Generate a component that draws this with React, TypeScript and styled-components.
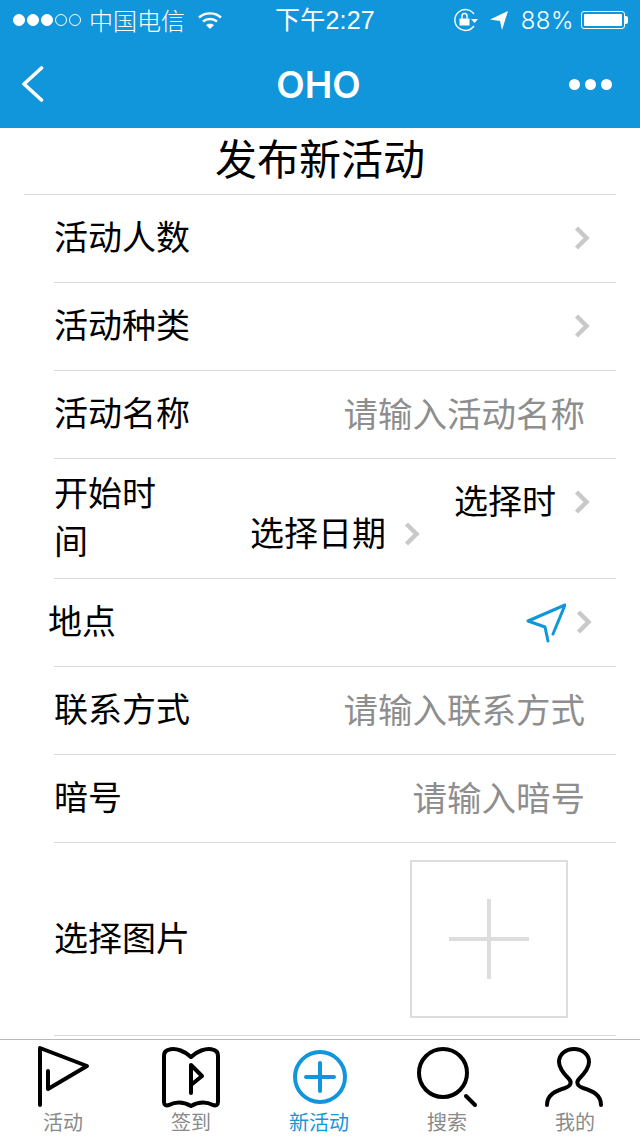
import React, { FunctionComponent } from 'react';
import styled, { createGlobalStyle } from 'styled-components';

const BLUE = '#1296db';
const CJK = `"Noto Sans CJK SC", "Noto Sans", sans-serif`;

const GlobalStyle = createGlobalStyle`
  html, body { margin: 0; padding: 0; background: #fff; }
  * { box-sizing: border-box; }
`;

const Page = styled.div`
  width: 640px;
  height: 1136px;
  display: flex;
  flex-direction: column;
  overflow: hidden;
  background: #fff;
  font-family: ${CJK};
  color: #000;
`;

const Header = styled.header`
  height: 128px;
  flex: none;
  background: ${BLUE};
  color: #fff;
  display: flex;
  flex-direction: column;
`;

const StatusBar = styled.div`
  height: 40px;
  padding: 0 13px;
  display: flex;
  align-items: center;
  justify-content: space-between;
  position: relative;
  font-size: 24px;
`;

const StatusGroup = styled.div`
  display: flex;
  align-items: center;
`;

const Dot = styled.span<{ $off?: boolean }>`
  width: 12px;
  height: 12px;
  margin-right: 2px;
  border-radius: 50%;
  background: ${(p) => (p.$off ? 'transparent' : '#fff')};
  border: 1px solid #fff;
`;

const Carrier = styled.span`
  margin: 0 12px 0 6px;
  font-size: 24px;
  line-height: 40px;
  font-weight: 300;
`;

const Clock = styled.span`
  position: absolute;
  left: 275px;
  top: 0;
  line-height: 40px;
  font-size: 25px;
  letter-spacing: 0.2px;
  font-family: "Liberation Sans", ${CJK};
`;

const Percent = styled.span`
  margin: 0 7px 0 12px;
  font-family: Inter, "Liberation Sans", sans-serif;
  font-size: 24px;
  font-weight: 300;
  letter-spacing: 0.5px;
`;

const Battery = styled.span`
  width: 44px;
  height: 18px;
  padding: 2px;
  border: 1px solid #fff;
  border-radius: 3px;
  display: flex;
  margin-right: 2px;
  position: relative;
  &::before {
    content: '';
    width: 38px;
    background: #fff;
    border-radius: 1px;
  }
  &::after {
    content: '';
    position: absolute;
    right: -4px;
    top: 4px;
    width: 3px;
    height: 8px;
    background: #fff;
    border-radius: 0 2px 2px 0;
  }
`;

const NavBar = styled.div`
  height: 88px;
  padding: 0 22px;
  display: flex;
  align-items: center;
  justify-content: space-between;
`;

const NavTitle = styled.div`
  font-family: Inter, "Liberation Sans", sans-serif;
  font-size: 37px;
  font-weight: 600;
  margin-left: 24px;
`;

const NavDots = styled.div`
  display: flex;
  gap: 5px;
  margin-right: 6px;
`;

const NavDot = styled.span`
  width: 11px;
  height: 11px;
  border-radius: 50%;
  background: #fff;
`;

const Main = styled.main`
  flex: 1;
  min-height: 0;
  padding: 0 24px;
`;

const Title = styled.h1`
  margin: 0;
  height: 67px;
  border-bottom: 1px solid #d9d9d9;
  font-size: 42px;
  font-weight: 400;
  line-height: 58px;
  text-align: center;
`;

const Row = styled.div<{ $height?: number }>`
  height: ${(p) => p.$height ?? 88}px;
  margin-left: 30px;
  padding-right: 26px;
  border-bottom: 1px solid #d9d9d9;
  display: flex;
  align-items: center;
  justify-content: space-between;
  font-size: 34px;
`;

const Label = styled.span`
  flex: none;
  padding-bottom: 6px;
`;

const NarrowLabel = styled(Label)`
  width: 110px;
  line-height: 48px;
`;

const LocationLabel = styled(Label)`
  margin-left: -6px;
`;

const TextField = styled.input`
  flex: 1;
  min-width: 0;
  margin-right: 5px;
  padding: 0 0 6px;
  border: 0;
  outline: 0;
  background: transparent;
  text-align: right;
  font: inherit;
  font-size: 34.5px;
  &::placeholder { color: #8e8e8e; opacity: 1; }
`;

const Picker = styled.div<{ $shift: number }>`
  display: flex;
  align-items: center;
  gap: 18px;
  transform: translateY(${(p) => p.$shift}px);
`;

const TimeCells = styled.div`
  flex: 1;
  display: flex;
  justify-content: flex-end;
  gap: 34px;
`;

const LocationCell = styled.div`
  display: flex;
  align-items: center;
  gap: 10px;
  margin-right: -2px;
`;

const ImageRow = styled(Row)`
  padding-right: 48px;
`;

const UploadBox = styled.div`
  width: 158px;
  height: 158px;
  border: 2px solid #ddd;
  display: flex;
  align-items: center;
  justify-content: center;
`;

const TabBar = styled.nav`
  height: 97px;
  flex: none;
  border-top: 1px solid #b9b9b9;
  display: grid;
  grid-template-columns: repeat(5, 1fr);
`;

const Tab = styled.div<{ $active?: boolean }>`
  display: flex;
  flex-direction: column;
  align-items: center;
  padding-top: 4px;
  font-size: 20px;
  line-height: 24px;
  color: ${(p) => (p.$active ? BLUE : '#8a8a8a')};
`;

const TabLabel = styled.span`
  margin-right: 2px;
`;

const TabIcon = styled.svg`
  width: 64px;
  height: 64px;
  display: block;
  margin-bottom: 2px;
  fill: none;
  stroke-width: 4;
  stroke-linecap: round;
  stroke-linejoin: round;
`;

const Chevron: FunctionComponent = () => (
  <svg width="16" height="24" viewBox="0 0 16 24" fill="none">
    <path d="M2.5 1 12.5 11 2.5 21" stroke="#c9c9c9" strokeWidth="4.5" />
  </svg>
);

const Wifi: FunctionComponent = () => (
  <svg width="26" height="20" viewBox="0 0 26 20" fill="none" stroke="#fff" strokeWidth="2.4">
    <path d="M2 7.5c6-5.5 16-5.5 22 0" />
    <path d="M6 11.5c4-3.4 10-3.4 14 0" />
    <path d="M13 19l-4-4c2.300-1.800 5.700-1.800 8 0z" fill="#fff" stroke="none" />
  </svg>
);

const tabs = [
  {
    label: '活动',
    stroke: '#000',
    icon: <path d="M8 5v56M8 4 55 22 16 45V27" />,
  },
  {
    label: '签到',
    stroke: '#000',
    icon: (
      <>
        <path d="M31 13C26 8 16 3 8 6 5 7 4 9 4 12v46c0 3 2 4 5 3 8-4 15-3 22 1 7-4 14-5 22-1 3 1 5 0 5-3V12c0-3-1-5-4-6-8-3-18 2-23 7z" />
        <path d="M31 49V21l11 11-11 9" />
      </>
    ),
  },
  {
    label: '新活动',
    stroke: BLUE,
    active: true,
    icon: (
      <>
        <circle cx="32" cy="33" r="25" />
        <path d="M18 33h28M32 19v28" />
      </>
    ),
  },
  {
    label: '搜索',
    stroke: '#000',
    icon: (
      <>
        <circle cx="27" cy="29" r="24" />
        <path d="M50 52l9 9" />
      </>
    ),
  },
  {
    label: '我的',
    stroke: '#000',
    icon: (
      <path d="M3 61C3 51 11 47 21 44c6-2 7-6 4-9-6-6-10-11-10-17C15 10 22 5 30 5s15 5 15 13c0 6-4 11-10 17-3 3-2 7 4 9 10 3 18 7 18 17" />
    ),
  },
];

const App: FunctionComponent = () => {
  return (
    <Page>
      <GlobalStyle />
      <Header>
        <StatusBar>
          <StatusGroup>
            <Dot />
            <Dot />
            <Dot />
            <Dot $off />
            <Dot $off />
            <Carrier>中国电信</Carrier>
            <Wifi />
          </StatusGroup>
          <Clock>下午2:27</Clock>
          <StatusGroup>
            <svg width="26" height="24" viewBox="0 0 26 24" fill="none" stroke="#fff" strokeWidth="1.4">
              <path d="M21 6A10.500 10.500 0 1 0 21 18" />
              <path d="M18 11h7l-3.500 4z" fill="#fff" stroke="none" />
              <rect x="6.500" y="10.500" width="10" height="7" fill="#fff" stroke="none" />
              <path d="M9 10.500V8a2.500 2.500 0 0 1 5 0v2.500" />
            </svg>
            <svg width="20" height="20" viewBox="0 0 20 20" style={{ marginLeft: 10 }}>
              <path d="M1 9.500 19 1l-6 19-2-9z" fill="#fff" />
            </svg>
            <Percent>88%</Percent>
            <Battery />
          </StatusGroup>
        </StatusBar>
        <NavBar>
          <svg width="22" height="36" viewBox="0 0 22 36" fill="none">
            <path d="M19.500 2 2 18 19.500 34" stroke="#fff" strokeWidth="3.6" strokeLinecap="round" strokeLinejoin="round" />
          </svg>
          <NavTitle>OHO</NavTitle>
          <NavDots>
            <NavDot />
            <NavDot />
            <NavDot />
          </NavDots>
        </NavBar>
      </Header>
      <Main>
        <Title>发布新活动</Title>
        <Row>
          <Label>活动人数</Label>
          <Chevron />
        </Row>
        <Row>
          <Label>活动种类</Label>
          <Chevron />
        </Row>
        <Row>
          <Label>活动名称</Label>
          <TextField placeholder="请输入活动名称" />
        </Row>
        <Row $height={120}>
          <NarrowLabel>开始时间</NarrowLabel>
          <TimeCells>
            <Picker $shift={16}>
              <Label>选择日期</Label>
              <Chevron />
            </Picker>
            <Picker $shift={-16}>
              <Label>选择时</Label>
              <Chevron />
            </Picker>
          </TimeCells>
        </Row>
        <Row>
          <LocationLabel>地点</LocationLabel>
          <LocationCell>
            <svg width="40" height="40" viewBox="0 0 40 40" fill="none">
              <path d="M39 2 2 18 19 24 22 38M39 2 27 31" stroke={BLUE} strokeWidth="3" strokeLinecap="round" strokeLinejoin="round" />
            </svg>
            <Chevron />
          </LocationCell>
        </Row>
        <Row>
          <Label>联系方式</Label>
          <TextField placeholder="请输入联系方式" />
        </Row>
        <Row>
          <Label>暗号</Label>
          <TextField placeholder="请输入暗号" />
        </Row>
        <ImageRow $height={193}>
          <Label>选择图片</Label>
          <UploadBox>
            <svg width="80" height="80" viewBox="0 0 80 80">
              <path d="M0 40h80M40 0v80" stroke="#ddd" strokeWidth="4" />
            </svg>
          </UploadBox>
        </ImageRow>
      </Main>
      <TabBar>
        {tabs.map((tab) => (
          <Tab key={tab.label} $active={tab.active}>
            <TabIcon viewBox="0 0 64 64" stroke={tab.stroke}>
              {tab.icon}
            </TabIcon>
            <TabLabel>{tab.label}</TabLabel>
          </Tab>
        ))}
      </TabBar>
    </Page>
  );
};

export default App;
